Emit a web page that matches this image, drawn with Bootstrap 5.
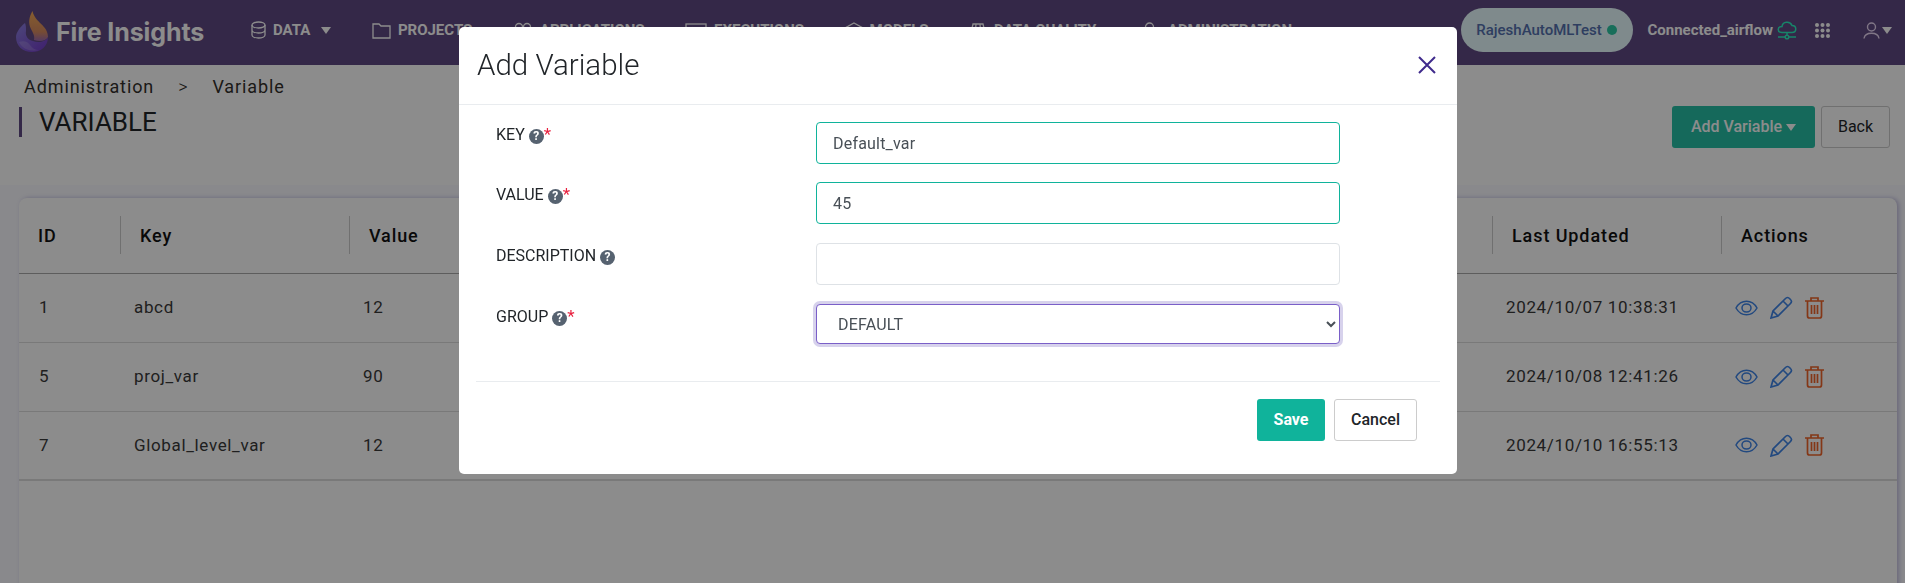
<!DOCTYPE html>
<html lang="en">
<head>
  <meta charset="UTF-8" />
  <title>Fire Insights - Variable</title>
  <link rel="stylesheet" href="https://cdn.jsdelivr.net/npm/bootstrap@5.3.0/dist/css/bootstrap.min.css" />
  <style>
  body { font-family: Roboto, "Liberation Sans", sans-serif; background: #f9f9ff; overflow: hidden; color: #212529; }
  .modal-backdrop { --bs-backdrop-opacity: .45; }

  .top-bar { height: 65px; background: #604a83; padding: 0 0 5px 16px; color: #fff; }
  .brand-logo { margin-top: 3px; flex: none; }
  .brand-name { font-family: Inter, "Open Sans", sans-serif; font-weight: 700; font-size: 25px; margin: 5px 0 0 8px; width: 195px; letter-spacing: -.1px; }
  .nav-entry { font-size: 15px; font-weight: 700; text-transform: uppercase; color: #fff; gap: 7px; margin-right: 40.5px; }
  .nav-entry svg { flex: none; }
  .nav-entry-last { margin-left: 6px; gap: 12px; }
  .caret-down { width: 0; height: 0; border-left: 5px solid transparent; border-right: 5px solid transparent; border-top: 7px solid #fff; display: inline-block; }
  .project-pill { width: 172px; height: 44px; border-radius: 22px; background: #e7fbff; color: #5571af; font-size: 15px; font-weight: 500; margin-right: 15px; flex: none; }
  .status-dot { width: 10px; height: 10px; border-radius: 50%; background: #2cc8a5; display: inline-block; margin-left: 5px; }
  .conn-name { font-size: 15px; font-weight: 700; }
  .grid-icon { margin-left: 18px; }
  .user-icon { margin-left: 32px; }
  .user-caret { margin: 0 13px 0 1px; }

  .title-area { height: 120px; background: #fff; padding: 0 15px 0 24px; position: relative; }
  .crumbs { font-size: 18px; letter-spacing: .9px; padding-top: 12px; line-height: 20px; color: #33302c; }
  .crumb-sep { margin: 0 24px; font-weight: 300; }
  .page-heading { border-left: 3px solid #604a83; margin: 10px 0 0 -5px; padding-left: 17px; font-size: 26px; line-height: 30px; font-weight: 400; height: 30px; color: #212529; }
  .btn-add { background: #27c0a6; color: #fff; font-size: 16px; font-weight: 500; width: 143px; height: 42px; border: 0; border-radius: 3px; }
  .btn-back { background: #fff; color: #212529; font-size: 16px; width: 69px; height: 42px; border: 1px solid #ccc; border-radius: 3px; margin-left: 6px; }
  .title-actions { position: absolute; right: 15px; top: 41px; }

  .var-card { margin: 13px 8px 0 19px; background: #fff; border-radius: 8px 8px 0 0; height: 400px; box-shadow: 2px 0 4px rgba(90,80,160,.35); overflow: hidden; border: 0; }
  .var-table { table-layout: fixed; width: 100%; margin: 0; }
  .var-table th { height: 75px; font-size: 18px; font-weight: 500; letter-spacing: .9px; padding: 0 0 0 20px; vertical-align: middle; border-bottom: 1px solid #aaa; position: relative; color: #111; }
  .var-table th:first-child { padding-left: 19px; }
  .var-table th + th::before { content: ""; position: absolute; left: 0; top: 18px; height: 38px; width: 1px; background: #ccc; }
  .var-table td { height: 69px; font-size: 17px; letter-spacing: .65px; padding: 0 0 0 14px; vertical-align: middle; border-bottom: 1px solid #dcdcdc; color: #3a3a3a; }
  .var-table td:first-child { padding-left: 20px; }
  .var-table tr:last-child td { border-bottom-width: 2px; }
  .action-icons { gap: 12px; }

  .var-dialog { max-width: 998px; margin: 27px 0 0 459px; }
  .var-dialog .modal-content { border-radius: 5px; border: 0; height: 447px; }
  .var-dialog .modal-header { height: 78px; padding: 0 16px 0 18px; border-bottom: 1px solid #e9ecef; }
  .var-dialog .modal-title { font-size: 29.500px; font-weight: 300; color: #212529; }
  .dialog-close { background: none; border: 0; padding: 0 0 2px; line-height: 0; margin-right: 5px; }
  .var-dialog .modal-body { padding: 17px 0 0 37px; flex: none; }
  .field-row { margin-bottom: 18px; }
  .field-row + .field-row { margin-bottom: 19px; }
  .field-label { width: 320px; font-size: 16px; line-height: 25px; color: #212529; }
  .field-label .req { color: #e8213f; font-size: 17px; line-height: 16px; }
  .help-dot { width: 15px; height: 15px; border-radius: 50%; background: #566270; color: #fff; font-size: 12px; font-weight: 700; line-height: 15px; text-align: center; display: inline-block; vertical-align: 0; }
  .var-dialog .form-control, .var-dialog .form-select { width: 524px; height: 42px; border-radius: 4px; font-size: 16px; letter-spacing: .2px; color: #495057; padding-left: 16px; }
  .var-dialog .filled { border-color: #10b39b; }
  .var-dialog .form-select { height: 40px; padding-left: 17px; border: 1px solid #7a5fc8; box-shadow: 0 0 0 3px rgba(96,74,180,.25); background-image: none; appearance: auto; -webkit-appearance: auto; padding-right: 4px; }
  .dialog-foot { margin: 37px 17px 0; border-top: 1px solid #e9ecef; padding: 17px 23px 0 0; gap: 9px; }
  .btn-save { background: #10b39b; color: #fff; font-size: 16px; font-weight: 700; width: 68px; height: 42px; border-radius: 3px; border: 0; }
  .btn-cancel { background: #fff; color: #212529; font-size: 16px; font-weight: 500; width: 83px; height: 42px; border: 1px solid #ccc; border-radius: 3px; }
  </style>
</head>
<body>
  <div class="top-bar d-flex align-items-center">
    <svg class="brand-logo" width="32" height="41" viewBox="0 0 32 41">
      <defs>
        <linearGradient id="flameTop" x1="0" y1="0" x2="0" y2="1"><stop offset="0" stop-color="#f5ab55"/><stop offset=".7" stop-color="#d68a60"/><stop offset="1" stop-color="#9a6ab0"/></linearGradient>
        <linearGradient id="flameBase" x1="0" y1="0" x2="1" y2="1"><stop offset="0" stop-color="#8d83e0"/><stop offset="1" stop-color="#7238c8"/></linearGradient>
      </defs>
      <path d="M9 12C3 17 0 22 0 26c0 9 7 15 16 15s16-6 16-15c-2 5-10 6-15 4-5-1-8-5-7-10 0-3 0-6-1-8z" fill="url(#flameBase)"/>
      <path d="M16.500 0C13 6 12 12 15 18c2 4 4 7 3 11 6 2 12 1 14-3C32 14 19 12 16.500 0z" fill="url(#flameTop)"/>
      <path d="M3 31c5-2 9 0 11 3s5 5 9 5c-7 2-16 0-20-8z" fill="#fff" opacity=".16"/>
    </svg>
    <span class="brand-name">Fire Insights</span>

    <div class="d-flex align-items-center flex-grow-1">
      <span class="nav-entry d-flex align-items-center">
        <svg width="15" height="18" viewBox="0 0 15 18" fill="none" stroke="#fff" stroke-width="1.300"><ellipse cx="7.500" cy="4" rx="6.500" ry="3"/><path d="M1 4v10c0 1.700 3 3 6.500 3s6.500-1.300 6.500-3V4M1 9c0 1.700 3 3 6.500 3S14 10.700 14 9"/></svg>
        Data <span class="caret-down ms-1"></span>
      </span>
      <span class="nav-entry d-flex align-items-center">
        <svg width="19" height="17" viewBox="0 0 19 17" fill="none" stroke="#fff" stroke-width="1.300"><path d="M1 2h6l2 2h9v12H1z"/></svg>
        Projects
      </span>
      <span class="nav-entry d-flex align-items-center">
        <svg width="20" height="17" viewBox="0 0 20 17" fill="none" stroke="#fff" stroke-width="1.300"><circle cx="6" cy="5" r="3.500"/><circle cx="14" cy="5" r="3.500"/><path d="M1 16c0-7 9-7 9 0M10 16c0-7 9-7 9 0"/></svg>
        Applications
      </span>
      <span class="nav-entry d-flex align-items-center">
        <svg width="22" height="17" viewBox="0 0 22 17" fill="none" stroke="#fff" stroke-width="1.300"><rect x="1" y="2" width="20" height="13"/><path d="M8 6l4 2.500L8 11z"/></svg>
        Executions
      </span>
      <span class="nav-entry d-flex align-items-center">
        <svg width="18" height="17" viewBox="0 0 18 17" fill="none" stroke="#fff" stroke-width="1.300"><path d="M9 1l8 4.500v6L9 16l-8-4.500v-6zM1 5.500L9 10l8-4.500M9 10v6"/></svg>
        Models
      </span>
      <span class="nav-entry d-flex align-items-center">
        <svg width="18" height="17" viewBox="0 0 18 17" fill="none" stroke="#fff" stroke-width="1.300"><path d="M4 2h10l3 13H1zM7 2L6 15M11 2l1 13M3 8h12"/></svg>
        Data Quality
      </span>
      <span class="nav-entry nav-entry-last d-flex align-items-center">
        <svg width="13" height="17" viewBox="0 0 13 17" fill="none" stroke="#fff" stroke-width="1.300"><circle cx="6.500" cy="5" r="4"/><path d="M1 16c0-6 11-6 11 0"/></svg>
        Administration
      </span>
    </div>

    <div class="project-pill d-flex align-items-center justify-content-center">RajeshAutoMLTest<span class="status-dot"></span></div>
    <span class="conn-name">Connected_airflow</span>
    <svg class="ms-1" width="20" height="20" viewBox="0 0 20 20" fill="none" stroke="#2af0c0" stroke-width="1.500"><path d="M5 12.500c-5 0-5-6 0-6 .5-5 8-6 10-1 5 0 5 7 0 7z"/><path d="M10 12.500V16M1 17h7M12 17h7"/><circle cx="10" cy="17" r="1.800"/></svg>
    <svg class="grid-icon" width="15" height="15" viewBox="0 0 15 15" fill="#fff"><circle cx="2" cy="2" r="2"/><circle cx="7.500" cy="2" r="2"/><circle cx="13" cy="2" r="2"/><circle cx="2" cy="7.500" r="2"/><circle cx="7.500" cy="7.500" r="2"/><circle cx="13" cy="7.500" r="2"/><circle cx="2" cy="13" r="2"/><circle cx="7.500" cy="13" r="2"/><circle cx="13" cy="13" r="2"/></svg>
    <svg class="user-icon" width="19" height="17" viewBox="0 0 17 17" fill="none" stroke="#e9d8f5" stroke-width="1.400"><circle cx="8.500" cy="5" r="4"/><path d="M1 16.500c1-7 14-7 15 0"/></svg>
    <span class="caret-down user-caret"></span>
  </div>

  <div class="title-area">
    <div class="crumbs">Administration<span class="crumb-sep">&gt;</span>Variable</div>
    <div class="page-heading">VARIABLE</div>
    <div class="title-actions d-flex">
      <button type="button" class="btn-add d-flex align-items-center justify-content-center gap-1">Add Variable <span class="caret-down"></span></button>
      <button type="button" class="btn-back">Back</button>
    </div>
  </div>

  <div class="card var-card">
    <table class="table var-table">
      <colgroup><col style="width:101px"><col style="width:229px"><col><col style="width:229px"><col style="width:176px"></colgroup>
      <thead>
        <tr><th>ID</th><th>Key</th><th>Value</th><th>Last Updated</th><th>Actions</th></tr>
      </thead>
      <tbody id="varRows"></tbody>
    </table>
  </div>

  <div class="modal-backdrop show"></div>
  <div class="modal d-block">
    <div class="modal-dialog var-dialog">
      <div class="modal-content">
        <div class="modal-header">
          <h5 class="modal-title">Add Variable</h5>
          <button type="button" class="dialog-close" aria-label="Close">
            <svg width="18" height="18" viewBox="0 0 18 18" stroke="#3f2a8c" stroke-width="2" fill="none"><path d="M1 1l16 16M17 1L1 17"/></svg>
          </button>
        </div>
        <div class="modal-body">
          <div class="field-row d-flex">
            <label class="field-label">KEY <span class="help-dot">?</span><span class="req">*</span></label>
            <input type="text" class="form-control filled" value="Default_var" />
          </div>
          <div class="field-row d-flex">
            <label class="field-label">VALUE <span class="help-dot">?</span><span class="req">*</span></label>
            <input type="text" class="form-control filled" value="45" />
          </div>
          <div class="field-row d-flex">
            <label class="field-label">DESCRIPTION <span class="help-dot">?</span></label>
            <input type="text" class="form-control" />
          </div>
          <div class="d-flex">
            <label class="field-label">GROUP <span class="help-dot">?</span><span class="req">*</span></label>
            <select class="form-select"><option>DEFAULT</option></select>
          </div>
        </div>
        <div class="dialog-foot d-flex justify-content-end">
          <button type="button" class="btn-save">Save</button>
          <button type="button" class="btn-cancel">Cancel</button>
        </div>
      </div>
    </div>
  </div>

  <script src="https://cdn.jsdelivr.net/npm/bootstrap@5.3.0/dist/js/bootstrap.bundle.min.js"></script>
  <script>
    const rows = [
      [1, "abcd", 12, "2024/10/07 10:38:31"],
      [5, "proj_var", 90, "2024/10/08 12:41:26"],
      [7, "Global_level_var", 12, "2024/10/10 16:55:13"]
    ];
    const icons = `<div class="action-icons d-flex align-items-center">
      <svg width="23" height="16" viewBox="0 0 23 16" fill="none" stroke="#3f85e8" stroke-width="1.500"><path d="M1 8c5-9 16-9 21 0-5 9-16 9-21 0z"/><ellipse cx="11.500" cy="8" rx="4.500" ry="4"/></svg>
      <svg width="23" height="23" viewBox="0 0 23 23" fill="none" stroke="#3f85e8" stroke-width="1.700"><path d="M1 22l2-7L15 3c2-2 3-2 5 0s2 3 0 5L8 20zM3 15l5 5M13 5l5 5"/></svg>
      <svg width="19" height="22" viewBox="0 0 19 22" fill="none" stroke="#f0652a" stroke-width="1.700"><path d="M0 4h19M6 4V1h7v3M2.500 4v15c0 1.500 1 2 2 2h10c1 0 2-.5 2-2V4M6.500 8v9M9.500 8v9M12.500 8v9"/></svg>
    </div>`;
    document.getElementById("varRows").innerHTML = rows.map(r =>
      `<tr><td>${r[0]}</td><td>${r[1]}</td><td>${r[2]}</td><td>${r[3]}</td><td>${icons}</td></tr>`
    ).join("");
  </script>
</body>
</html>
